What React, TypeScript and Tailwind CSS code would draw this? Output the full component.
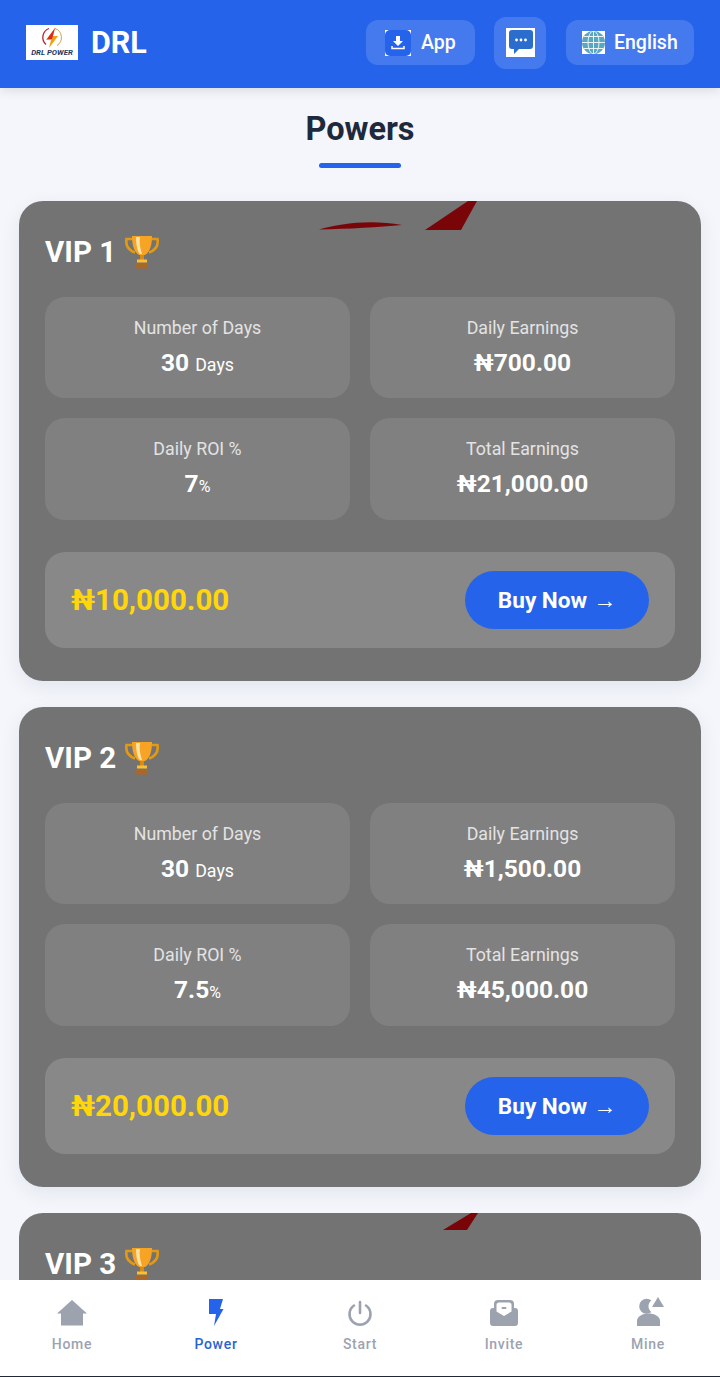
import React from 'react';

const FONT = { fontFamily: 'Roboto, sans-serif' };

// only the first two plans are fully on screen, VIP 3 is cut by the nav bar
const plans = [
  { name: 'VIP 1', days: '30', daily: '₦700.00', roi: '7', total: '₦21,000.00', price: '₦10,000.00' },
  { name: 'VIP 2', days: '30', daily: '₦1,500.00', roi: '7.5', total: '₦45,000.00', price: '₦20,000.00' },
];

const Trophy = () => (
  <svg width="36" height="34" viewBox="0 0 36 34" className="shrink-0">
    <path d="M8 4H2.500C1.500 10 4 15 11 17.500M28 4h5.500C34.500 10 32 15 25 17.500" fill="none" stroke="#e39a12" strokeWidth="2.600" />
    <path d="M8 1h20c0 9-2 16-7 19h-6C10 17 8 10 8 1z" fill="#f7a425" />
    <path d="M12 2h4c-1 5 0 11 2 17h-2c-3-3-4-11-4-17z" fill="#fde3a7" />
    <rect x="16" y="20" width="4" height="6" fill="#d98a12" />
    <rect x="13" y="24.500" width="10" height="3" fill="#fbc02d" />
    <rect x="12" y="28" width="12" height="5.500" rx="1" fill="#a9682a" />
  </svg>
);

const Stat = ({ label, children }: { label: string; children: React.ReactNode }) => (
  <div className="h-[101.300px] rounded-[20px] bg-[#808080] flex flex-col items-center pt-[19px]">
    <div className="text-[17.800px] leading-[24px] text-[#e3e3e3]">{label}</div>
    <div className="mt-[6px] text-[24.500px] leading-[34px] font-bold text-white">{children}</div>
  </div>
);

const VipTitle = ({ name }: { name: string }) => (
  <div className="flex items-center gap-[8px] h-[40px]">
    <span className="text-[29.500px] leading-[40px] font-bold text-white">{name}</span>
    <Trophy />
  </div>
);

const PlanCard = ({ plan, index }: { plan: typeof plans[number]; index: number }) => (
  <div className="relative shrink-0 h-[480px] rounded-[24px] bg-[#737373] px-[26px] pt-[31px] shadow-[0_6px_20px_rgba(30,41,80,0.08)]">
    {index === 0 && (
      <svg className="absolute left-[300px] top-0" width="160" height="30" viewBox="0 0 160 30">
        <path d="M0 28.500C20 23 50 18 83 24C60 26 30 28 0 28.500z" fill="#7a0508" />
        <path d="M106 29L149 0h9L142 29z" fill="#7a0508" />
      </svg>
    )}
    <VipTitle name={plan.name} />
    <div className="mt-[25px] grid grid-cols-2 gap-[20px]">
      <Stat label="Number of Days">
        {plan.days} <span className="text-[17.800px] font-normal">Days</span>
      </Stat>
      <Stat label="Daily Earnings">{plan.daily}</Stat>
      <Stat label="Daily ROI %">
        {plan.roi}
        <span className="text-[16px] font-normal">%</span>
      </Stat>
      <Stat label="Total Earnings">{plan.total}</Stat>
    </div>
    <div className="mt-[32.500px] h-[96.200px] rounded-[20px] bg-[#888888] flex items-center justify-between pl-[26px] pr-[26px]">
      <span className="text-[29.500px] font-bold text-[#ffd60a]">{plan.price}</span>
      <button className="w-[184px] h-[58px] rounded-full bg-[#2563eb] text-white text-[22.600px] font-bold flex items-center justify-center pt-[2px]">
        Buy Now <span className="ml-[6px] text-[23px] font-bold">→</span>
      </button>
    </div>
  </div>
);

const NavItem = ({ label, active, children }: { label: string; active?: boolean; children: React.ReactNode }) => (
  <div className="flex flex-col items-center pt-[17px]">
    <div className="w-[32px] h-[32px] flex items-center justify-center">{children}</div>
    <span className={`mt-[6px] text-[14px] leading-[18px] font-medium tracking-[0.7px] ${active ? 'text-[#2b63d0]' : 'text-[#9ca3af]'}`}>{label}</span>
  </div>
);

export default function App() {
  return (
    <div className="h-[1377px] w-[720px] flex flex-col overflow-hidden bg-[#f4f6fb]" style={FONT}>
      <header className="shrink-0 h-[88px] bg-[#2563eb] flex items-center px-[26px] pb-[3px] shadow-[0_3px_10px_rgba(0,0,0,0.1)] z-10">
        <div className="w-[52px] h-[35px] bg-white flex flex-col items-center pt-[2px]">
          <svg width="22" height="22" viewBox="0 0 22 22">
            <path d="M8 1.500a9.500 9.500 0 0 0-3 16" fill="none" stroke="#b3262e" strokeWidth="1.300" />
            <path d="M14 1.500a9.500 9.500 0 0 1 2 17" fill="none" stroke="#c9a24a" strokeWidth="1" />
            <path d="M14 1L5 13h5l-2 8 9-12h-5z" fill="#f59e0b" />
            <path d="M14 1L6 12h5z" fill="#dc2626" />
          </svg>
          <span className="text-[7.800px] leading-[8px] font-bold italic text-[#1f3a5f] whitespace-nowrap">DRL POWER</span>
        </div>
        <span className="ml-[13px] text-[30.500px] font-bold text-white">DRL</span>
        <div className="ml-auto flex items-center">
          <div className="w-[109px] h-[45px] rounded-[12px] bg-white/15 flex items-center pl-[19px] gap-[10px]">
            <svg width="26" height="26" viewBox="0 0 26 26">
              <rect width="26" height="26" fill="#fff" />
              <rect width="26" height="26" rx="5" fill="#2563eb" />
              <path d="M11 6h4v5h3l-5 5-5-5h3z" fill="#fff" />
              <path d="M7 16v2.500h12V16" fill="none" stroke="#fff" strokeWidth="1.500" />
            </svg>
            <span className="text-[19.500px] font-medium text-white">App</span>
          </div>
          <div className="ml-[19px] w-[52px] h-[52px] rounded-[12px] bg-white/15 flex items-center justify-center">
            <svg width="29" height="29" viewBox="0 0 29 29">
              <rect width="29" height="29" fill="#fff" />
              <path d="M6 2h18a3 3 0 0 1 3 3v13a3 3 0 0 1-3 3H13l-5 5 0-5H6a3 3 0 0 1-3-3V5a3 3 0 0 1 3-3z" fill="#2a6dcc" />
              <circle cx="10.500" cy="12" r="1.400" fill="#fff" />
              <circle cx="15" cy="12" r="1.400" fill="#fff" />
              <circle cx="19.500" cy="12" r="1.400" fill="#fff" />
            </svg>
          </div>
          <div className="ml-[20px] w-[128px] h-[45px] rounded-[12px] bg-white/15 flex items-center pl-[16px] gap-[9px]">
            <svg width="23" height="23" viewBox="0 0 23 23">
              <rect width="23" height="23" fill="#fff" />
              <circle cx="11.500" cy="11.500" r="11.500" fill="#5aa5bf" />
              <g fill="none" stroke="#e6f4f8" strokeWidth="1">
                <ellipse cx="11.500" cy="11.500" rx="5.500" ry="11.500" />
                <path d="M11.500 0v23M2 5.500h19M0 11.500h23M2 17.500h19" />
              </g>
            </svg>
            <span className="text-[19.500px] font-medium text-white">English</span>
          </div>
        </div>
      </header>

      <main className="flex-1 min-h-0 overflow-hidden">
        <div className="flex flex-col items-center pt-[21px]">
          <h1 className="text-[32.500px] leading-[40px] font-bold text-[#1e293b]">Powers</h1>
          <div className="mt-[14px] w-[82px] h-[5px] rounded-full bg-[#2563eb]" />
        </div>
        <div className="mt-[33px] px-[19px] flex flex-col gap-[26px]">
          {plans.map((p, i) => (
            <PlanCard key={p.name} plan={p} index={i} />
          ))}
          <div className="relative shrink-0 h-[100px] rounded-t-[24px] bg-[#737373] px-[26px] pt-[31px]">
            <svg className="absolute left-[424px] top-0" width="36" height="17" viewBox="0 0 36 17">
              <path d="M0 17L28 0h7L24 17z" fill="#7a0508" />
            </svg>
            <VipTitle name="VIP 3" />
          </div>
        </div>
      </main>

      <nav className="shrink-0 h-[97px] bg-white border-b border-[#1f2937] grid grid-cols-5 z-10">
        <NavItem label="Home">
          <svg width="30" height="26" viewBox="0 0 30 26">
            <path d="M15 0L30 13.500H26V25.500H4V13.500H0z" fill="#9ca3af" />
          </svg>
        </NavItem>
        <NavItem label="Power" active>
          <svg width="16" height="28" viewBox="0 0 16 28">
            <path d="M1 0h14l-3 10h3.500L6 27l2-12H1z" fill="#2563eb" />
          </svg>
        </NavItem>
        <NavItem label="Start">
          <svg width="26" height="26" viewBox="0 0 26 26" fill="none" stroke="#9ca3af" strokeWidth="2.600" strokeLinecap="round">
            <path d="M13 2v11" />
            <path d="M7 5.500a10.500 10.500 0 1 0 12 0" />
          </svg>
        </NavItem>
        <NavItem label="Invite">
          <svg width="28" height="26" viewBox="0 0 28 26">
            <rect y="8" width="28" height="18" rx="3" fill="#9ca3af" />
            <path d="M4 13V4a4 4 0 0 1 4-4h12a4 4 0 0 1 4 4v9l-10 6z" fill="#9ca3af" />
            <path d="M6.500 11.500V5a2.500 2.500 0 0 1 2.500-2.500h10A2.500 2.500 0 0 1 21.500 5v6.500L14 16z" fill="#fff" />
            <rect x="11.500" y="7" width="5" height="2" rx="1" fill="#9ca3af" />
          </svg>
        </NavItem>
        <NavItem label="Mine">
          <svg width="28" height="30" viewBox="-2 1 28 30" className="overflow-visible">
            <path d="M22 0L28 10H16z" fill="#9ca3af" />
            <path d="M15.500 3.500A7.500 7.500 0 1 0 15.500 15A7 7 0 0 1 15.500 3.500z" fill="#9ca3af" />
            <path d="M1 29v-5C1 19 7 16.500 12.500 16.500S24 19 24 24v5z" fill="#9ca3af" />
          </svg>
        </NavItem>
      </nav>
    </div>
  );
}
